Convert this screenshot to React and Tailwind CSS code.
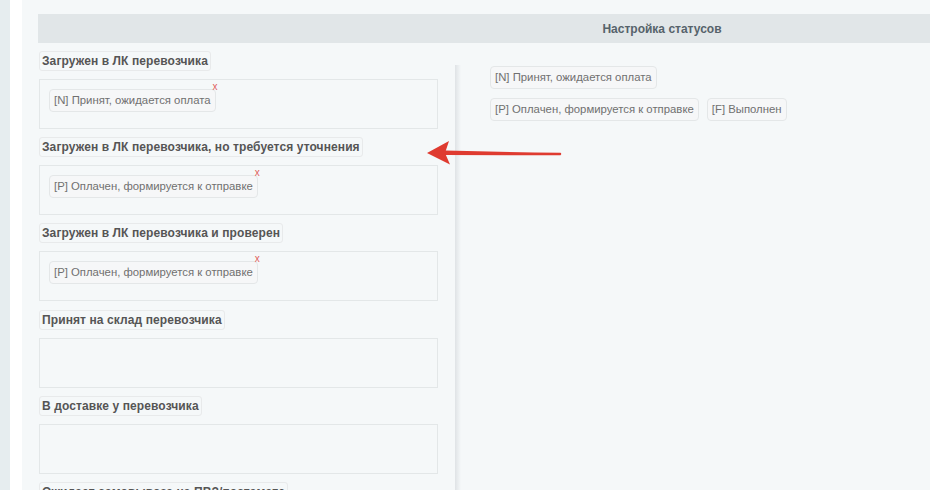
import React from 'react';

const groups = [
    { title: 'Загружен в ЛК перевозчика', chip: '[N] Принят, ожидается оплата' },
    { title: 'Загружен в ЛК перевозчика, но требуется уточнения', chip: '[P] Оплачен, формируется к отправке' },
    { title: 'Загружен в ЛК перевозчика и проверен', chip: '[P] Оплачен, формируется к отправке' },
    { title: 'Принят на склад перевозчика' },
    { title: 'В доставке у перевозчика' },
    { title: 'Ожидает самовывоза на ПВЗ/постамате' },
];

const Chip = ({ children, removable }) => (
    <div className="relative h-[23px] px-1 flex items-center rounded-[4px] border border-[#e4e7e8] bg-[#f6f7f8] text-[11.35px] text-[#707070] whitespace-nowrap">
        {children}
        {removable && (
            <span className="absolute -top-[9px] right-[-3px] text-[10px] leading-[12px] text-[#e0605c]">x</span>
        )}
    </div>
);

const App = () => {
    return (
        <div className="relative w-[930px] h-[490px] overflow-hidden flex bg-[#e6edef] font-['Liberation_Sans',Arial,sans-serif]">
            <div className="w-[10px] shrink-0"></div>
            <div className="w-[12px] shrink-0 bg-white"></div>
            <div className="flex-1 bg-[#f5f8f9] pl-4 pt-[14px]">
                <div className="h-[29px] bg-[#e1e6e8] flex items-center justify-center text-[12px] font-bold text-[#56636b] pl-[356px]">
                    Настройка статусов
                </div>
                <div className="flex">
                    <div className="relative w-[418px] h-[500px] shrink-0 pl-px pr-[18px] pt-2">
                        {/* the column shadow starts below the first label */}
                        <div className="absolute top-[22px] left-[-1px] bottom-0 w-[6px] ml-[418px] bg-linear-to-r from-[#dfe3e6] to-transparent"></div>
                        {groups.map((g) => (
                            <div key={g.title} className="mb-[8.2px]">
                                <div className="flex w-fit h-[20px] items-center px-[2px] rounded-[3px] border border-[#e8eaeb] text-[12px] font-bold text-[#555555] tracking-[0.1px] whitespace-nowrap">
                                    {g.title}
                                </div>
                                <div className="h-[50px] mt-[8px] border border-[#e3e7e8] pl-[9px] pt-[9px] flex items-start">
                                    {g.chip && <Chip removable>{g.chip}</Chip>}
                                </div>
                            </div>
                        ))}
                    </div>
                    <div className="pl-[34px] pt-[23px] flex flex-col gap-[9px]">
                        <div className="flex gap-2">
                            <Chip>[N] Принят, ожидается оплата</Chip>
                        </div>
                        <div className="flex gap-2">
                            <Chip>[P] Оплачен, формируется к отправке</Chip>
                            <Chip>[F] Выполнен</Chip>
                        </div>
                    </div>
                </div>
            </div>
            {/* red annotation arrow */}
            <svg className="absolute left-[420px] top-[135px]" width="150" height="35" viewBox="0 0 150 35" fill="none">
                <path d="M25 15.6 Q 85 17.2 140.5 17.8 Q 142 19 140.5 20.2 Q 85 20.2 25 20 Z" fill="#df3b30" />
                <path d="M7 18 L29 6 L25 18 L30 29.5 Z" fill="#df3b30" />
            </svg>
        </div>
    );
};

export default App;
